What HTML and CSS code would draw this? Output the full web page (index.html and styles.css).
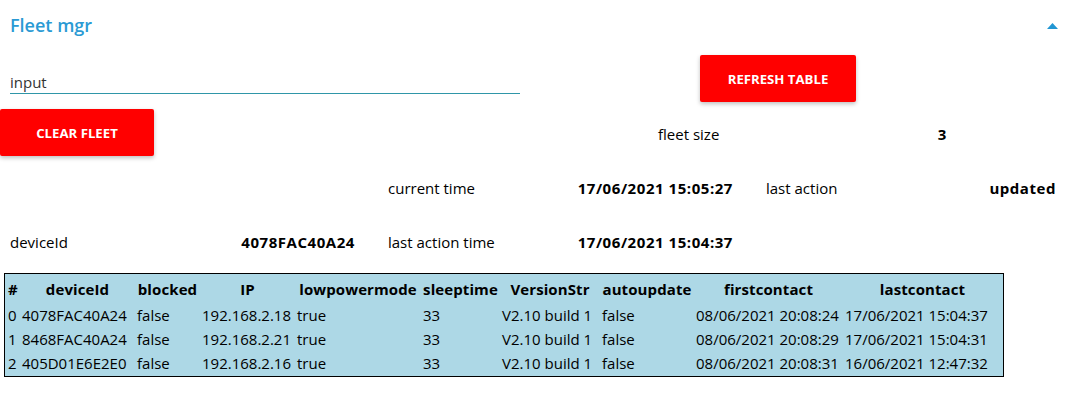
FILE: index.html
```html
<!DOCTYPE html>
<html lang="en">
<head>
<meta charset="utf-8">
<title>Fleet mgr</title>
<link rel="stylesheet" href="styles.css">
</head>
<body>
<section class="group">
  <header class="group-header">
    <h1 class="group-title">Fleet mgr</h1>
    <svg class="caret" width="11" height="6" viewBox="0 0 11 6"><polygon points="0,6 11,6 5.5,0" fill="#2196d3"/></svg>
  </header>

  <div class="row row-input">
    <div class="text-input">input</div>
    <button class="btn btn-refresh">REFRESH TABLE</button>
  </div>

  <div class="row row-clear">
    <button class="btn btn-clear">CLEAR FLEET</button>
    <div class="kv kv-fleet"><span class="k">fleet size</span><span class="v">3</span></div>
  </div>

  <div class="info-grid">
    <div class="kv empty"></div>
    <div class="kv"><span class="k">current time</span><span class="v">17/06/2021 15:05:27</span></div>
    <div class="kv"><span class="k">last action</span><span class="v">updated</span></div>
    <div class="kv"><span class="k">deviceId</span><span class="v">4078FAC40A24</span></div>
    <div class="kv"><span class="k">last action time</span><span class="v">17/06/2021 15:04:37</span></div>
    <div class="kv empty"></div>
  </div>

  <table class="fleet">
    <thead>
      <tr>
        <th class="c1">#</th>
        <th class="c2">deviceId</th>
        <th class="c3">blocked</th>
        <th class="c4">IP</th>
        <th class="c5">lowpowermode</th>
        <th class="c6">sleeptime</th>
        <th class="c7">VersionStr</th>
        <th class="c8">autoupdate</th>
        <th class="c9">firstcontact</th>
        <th class="c10">lastcontact</th>
      </tr>
    </thead>
    <tbody>
      <tr><td>0</td><td>4078FAC40A24</td><td>false</td><td>192.168.2.18</td><td>true</td><td>33</td><td>V2.10 build 1</td><td>false</td><td>08/06/2021 20:08:24</td><td>17/06/2021 15:04:37</td></tr>
      <tr><td>1</td><td>8468FAC40A24</td><td>false</td><td>192.168.2.21</td><td>true</td><td>33</td><td>V2.10 build 1</td><td>false</td><td>08/06/2021 20:08:29</td><td>17/06/2021 15:04:31</td></tr>
      <tr><td>2</td><td>405D01E6E2E0</td><td>false</td><td>192.168.2.16</td><td>true</td><td>33</td><td>V2.10 build 1</td><td>false</td><td>08/06/2021 20:08:31</td><td>16/06/2021 12:47:32</td></tr>
    </tbody>
  </table>
</section>
</body>
</html>
```
FILE: styles.css
```css
* { box-sizing: border-box; }

html, body {
  margin: 0;
  padding: 0;
  background: #ffffff;
}

body {
  font-family: "Open Sans", "Noto Sans", sans-serif;
  font-size: 15px;
  color: #000;
}

.group {
  width: 1068px;
}

.group-header {
  height: 50px;
  display: flex;
  align-items: center;
  justify-content: space-between;
  padding: 0 10px 0 10px;
}

.group-title {
  margin: 0;
  font-size: 18px;
  font-weight: 600;
  color: #2a9ad4;
  line-height: 24px;
}

.caret {
  display: block;
  margin-top: 2px;
}

.row {
  display: flex;
  align-items: flex-start;
}

.row-input {
  height: 52px;
}

.text-input {
  margin-left: 10px;
  margin-top: 22px;
  width: 510px;
  height: 22px;
  line-height: 20px;
  font-size: 15px;
  color: #333;
  border-bottom: 1px solid #2f96a8;
}

.btn {
  border: none;
  background: #ff0000;
  color: #ffffff;
  font-family: "Open Sans", "Noto Sans", sans-serif;
  font-weight: 700;
  font-size: 13.2px;
  height: 47px;
  border-radius: 2px;
  box-shadow: 0 2px 4px rgba(0, 0, 0, 0.25);
  padding: 0;
  letter-spacing: 0;
}

.btn-refresh {
  margin-left: 180px;
  margin-top: 5px;
  width: 156px;
}

.row-clear {
  margin-top: 7px;
  align-items: center;
  height: 47px;
}

.btn-clear {
  width: 154px;
}

.kv {
  display: flex;
  justify-content: space-between;
  align-items: center;
  white-space: nowrap;
}

.kv .v {
  font-weight: 700;
  letter-spacing: 0.55px;
}

.kv-fleet {
  margin-left: 504px;
  width: 289px;
  margin-top: 3px;
}

.info-grid {
  margin-top: 5px;
  padding-left: 10px;
  display: grid;
  grid-template-columns: 345px 345px 290px;
  grid-auto-rows: 54px;
  column-gap: 33px;
}

.fleet {
  margin: 4px 0 0 4px;
  width: 1000px;
  table-layout: fixed;
  border: 1px solid #000;
  border-spacing: 2px;
  background: #add8e6;
  font-size: 15px;
  white-space: nowrap;
}

.fleet th,
.fleet td {
  padding: 0 1px;
  overflow: visible;
}

.fleet th {
  font-weight: 700;
  text-align: center;
  height: 26px;
  letter-spacing: 0.1px;
}

.fleet td {
  text-align: left;
  height: 22px;
}

.c1 { width: 12px; text-align: left !important; }
.c2 { width: 113px; }
.c3 { width: 63px; }
.c4 { width: 93px; }
.c5 { width: 124px; }
.c6 { width: 77px; }
.c7 { width: 98px; }
.c8 { width: 92px; }
.c9 { width: 147px; }
.c10 { width: 157px; }
```
